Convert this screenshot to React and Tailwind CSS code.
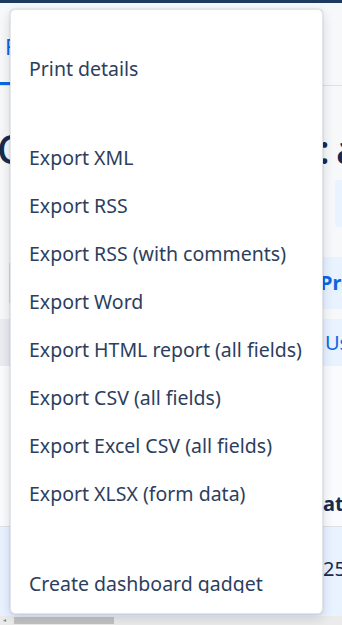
import React from "react";

const topItems = ["Print details"];
const exportItems = [
  "Export XML",
  "Export RSS",
  "Export RSS (with comments)",
  "Export Word",
  "Export HTML report (all fields)",
  "Export CSV (all fields)",
  "Export Excel CSV (all fields)",
  "Export XLSX (form data)",
];

const MenuItem = ({ label }) => (
  <div className="h-12 flex items-center px-[18px] whitespace-nowrap text-[19.5px] text-[#2c3e5d]">
    {label}
  </div>
);

export default function App() {
  return (
    <div
      className="relative w-[342px] h-[625px] overflow-hidden bg-[#f7f8f9]"
      style={{ fontFamily: '"Noto Sans", "Liberation Sans", sans-serif' }}
    >
      {/* Page behind the menu */}
      <div className="flex flex-col h-full">
        <div className="h-[3px] bg-[#1d3a5f]" />

        {/* tabs */}
        <div className="h-[83px] flex justify-between border-b border-[#dfe1e6]">
          <div className="w-[10px] overflow-hidden flex flex-col justify-between">
            <span className="pt-[31px] pl-[5px] text-[22px] leading-[24px] text-[#0c66e4]">F</span>
            <div className="h-[3px] bg-[#0c66e4]" />
          </div>
        </div>

        {/* heading */}
        <div className="h-[88px] pt-[38px] flex justify-between items-center text-[#172b4d] text-[40px] font-medium leading-none">
          <span className="-ml-[3px] w-[13px] overflow-hidden">C</span>
          <span className="w-[19px] overflow-hidden whitespace-nowrap flex">
            <span className="-ml-[4px]">:</span>
            <span className="ml-[6px]">a</span>
          </span>
        </div>

        {/* filter row */}
        <div className="h-[52px] flex justify-end items-center pt-[6px]">
          <div className="w-[7px] h-[47px] rounded-l-[4px] bg-[#e9f2ff]" />
        </div>

        <div className="h-[31px]" />

        {/* column tabs */}
        <div className="h-[52px] flex justify-between">
          <div className="w-[10px] flex justify-end items-center">
            <div className="w-[1px] h-[40px] bg-[#dcdfe4]" />
          </div>
          <div className="w-[19px] bg-[#e9f2ff] flex items-center -indent-[3px] text-[20px] font-bold text-[#0c66e4] overflow-hidden whitespace-nowrap">
            Pro
          </div>
        </div>

        <div className="h-[10px]" />

        <div className="h-[47px] flex justify-between">
          <div className="w-[10px] bg-[#ebecf0]" />
          <div className="w-[19px] bg-[#e9f2ff] flex items-center pl-[2px] text-[20px] text-[#0c66e4] overflow-hidden whitespace-nowrap">
            Us
          </div>
        </div>

        {/* table */}
        <div className="flex-1 flex flex-col bg-[#fafbfc]">
          <div className="h-[161px] flex justify-end items-end border-b border-[#dfe1e6] pb-[12px]">
            <span className="w-[19px] overflow-hidden whitespace-nowrap text-[20px] font-bold text-[#172b4d] leading-none">
              ate
            </span>
          </div>
          <div className="flex-1 bg-[#e9f2ff] flex justify-end items-center pb-[6px]">
            <span className="w-[19px] overflow-hidden whitespace-nowrap text-[20px] text-[#172b4d]">
              25
            </span>
          </div>
        </div>

        {/* scrollbar */}
        <div className="h-[9px] bg-[#ebebeb] flex items-center">
          <span className="w-[14px] text-[6px] text-[#888] pl-[3px]">◂</span>
          <div className="w-[100px] h-[7px] bg-[#c2c2c2]" />
        </div>
      </div>

      {/* Dropdown menu */}
      <div className="absolute top-[9px] left-[10px] w-[313px] h-[605px] bg-white rounded-[5px] border border-[#e3e5e8] shadow-[0_4px_12px_rgba(9,30,66,0.15),0_0_2px_rgba(9,30,66,0.2)]">
        <div className="mt-[5px] h-[578px] overflow-hidden">
          <div className="pt-[30px]">
            {topItems.map((label) => (
              <MenuItem key={label} label={label} />
            ))}
          </div>
          <div className="mt-[41px]">
            {exportItems.map((label) => (
              <MenuItem key={label} label={label} />
            ))}
          </div>
          <div className="mt-[42px]">
            <MenuItem label="Create dashboard gadget" />
          </div>
        </div>
      </div>
    </div>
  );
}
